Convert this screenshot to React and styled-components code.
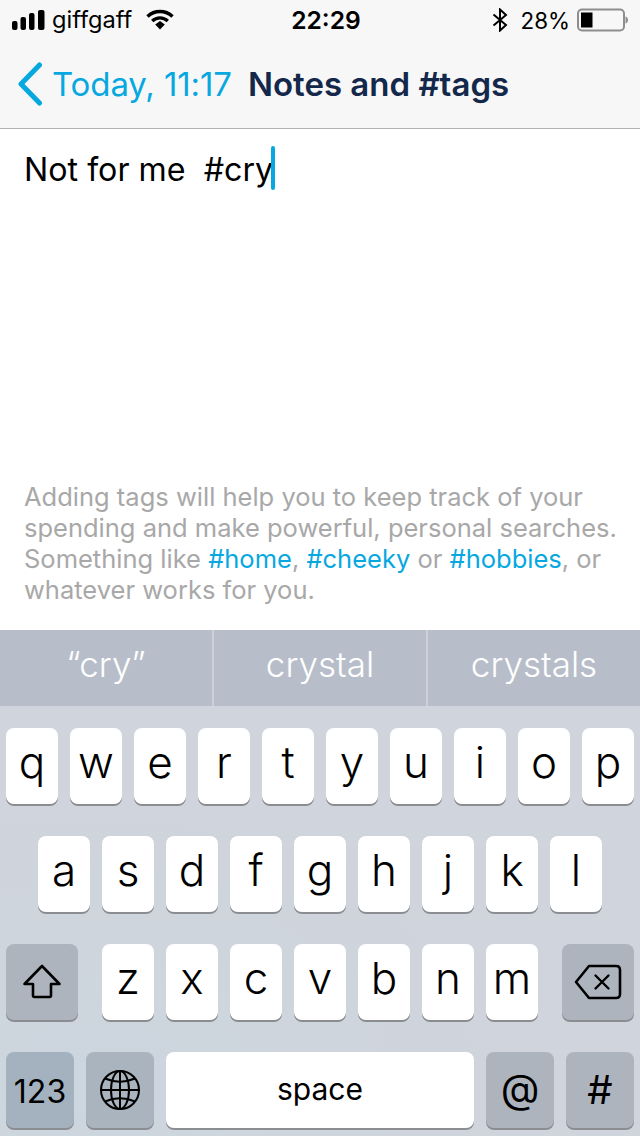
import React from "react";
import styled, { createGlobalStyle } from "styled-components";

const GlobalStyle = createGlobalStyle`
  html, body {
    margin: 0;
    padding: 0;
    background: #fff;
  }
  * {
    box-sizing: border-box;
  }
`;

const Screen = styled.div`
  width: 640px;
  height: 1136px;
  overflow: hidden;
  display: flex;
  flex-direction: column;
  font-family: Inter, "Liberation Sans", sans-serif;
  color: #000;
`;

const Header = styled.header`
  height: 129px;
  flex: none;
  background: #f7f7f7;
  border-bottom: 1px solid #b2b2b2;
`;

const StatusBar = styled.div`
  height: 40px;
  display: grid;
  grid-template-columns: 1fr auto 1fr;
  align-items: center;
  padding: 0 0 0 12px;
`;

const StatusLeft = styled.div`
  display: flex;
  align-items: center;
`;

const Carrier = styled.span`
  margin-left: 7px;
  margin-right: 14px;
  font-size: 23.6px;
  line-height: 1;
`;

const Clock = styled.span`
  font-weight: 600;
  font-size: 24.6px;
`;

const StatusRight = styled.div`
  display: flex;
  align-items: center;
  justify-content: flex-end;
  padding-right: 12px;
`;

const Percent = styled.span`
  margin: 0 7px 0 13px;
  font-size: 22.4px;
`;

const Nav = styled.nav`
  height: 88px;
  display: flex;
  align-items: center;
  padding: 0 0 0 17px;
`;

const BackLabel = styled.span`
  margin-left: 9px;
  color: #07a8e0;
  font-size: 33px;
  letter-spacing: -0.1px;
`;

const Title = styled.span`
  margin-left: 16px;
  color: #14284b;
  font-size: 33px;
  font-weight: 600;
`;

const Editor = styled.main`
  flex: 1;
  display: flex;
  flex-direction: column;
  justify-content: space-between;
  padding: 17px 20px 25px 24px;
  background: #fff;
`;

const NoteLine = styled.div`
  display: flex;
  align-items: center;
  height: 44px;
  font-size: 32.2px;
  white-space: pre;
`;

const NoteText = styled.span`
  padding-top: 3px;
`;

const Caret = styled.span`
  width: 4px;
  height: 44px;
  margin-left: -2px;
  border-radius: 2px;
  background: #07a8e0;
`;

const Hint = styled.p`
  margin: 0;
  color: #a8a8a8;
  font-size: 25.5px;
  line-height: 31px;
  white-space: nowrap;
`;

const Tag = styled.span`
  color: #07a8e0;
`;

const Suggestions = styled.div`
  height: 76px;
  flex: none;
  display: grid;
  grid-template-columns: 214px 214px 1fr;
  background: #b8bec9;
`;

const Suggestion = styled.div`
  display: flex;
  align-items: center;
  justify-content: center;
  padding-bottom: 9px;
  color: #fff;
  font-size: 35px;
  font-weight: 300;
  border-right: ${(p) => (p.$last ? "none" : "2px solid #cdd2da")};
`;

const Keyboard = styled.div`
  height: 430px;
  flex: none;
  display: flex;
  flex-direction: column;
  gap: 32px;
  padding: 22px 6px 0;
  background: radial-gradient(ellipse at 15% 88%, #ccd6de 0%, #d0d4dc 55%);
`;

const KeyRow = styled.div`
  display: flex;
  justify-content: ${(p) => p.$justify || "center"};
  gap: 12px;
`;

const Group = styled.div`
  display: flex;
  gap: 12px;
`;

const Key = styled.div`
  width: ${(p) => p.$width || 52}px;
  height: 76px;
  flex: none;
  display: flex;
  align-items: center;
  justify-content: center;
  padding-bottom: ${(p) => p.$lift ?? 8}px;
  padding-top: ${(p) => p.$drop ?? 0}px;
  border-radius: 8px;
  background: ${(p) => p.$bg || "#fff"};
  box-shadow: 0 2px 0 #8b8d91;
  font-size: 44px;
  font-weight: 300;
  color: #000;
`;

const SmallLabel = styled.span`
  font-size: ${(p) => p.$size || 30}px;
  font-weight: 400;
`;

function SignalIcon() {
  return (
    <svg width="33" height="22" viewBox="0 0 33 22">
      <rect x="0" y="12" width="5.5" height="9" rx="2" fill="#000" />
      <rect x="8.5" y="8" width="5.5" height="13" rx="2" fill="#000" />
      <rect x="17" y="4" width="5.5" height="17" rx="2" fill="#000" />
      <rect x="26" y="1" width="6.5" height="20" rx="2" fill="#000" />
    </svg>
  );
}

function WifiIcon() {
  return (
    <svg width="28" height="22" viewBox="0 0 28 22">
      <path d="M1.5 7.5 C8.5 0.8 19.5 0.8 26.5 7.5" fill="none" stroke="#000" strokeWidth="3.4" />
      <path d="M6.2 12 C10.8 7.8 17.2 7.8 21.8 12" fill="none" stroke="#000" strokeWidth="3.4" />
      <path d="M9.2 15.6 L14 12 L18.8 15.6 L14 20.5 Z" fill="#000" />
    </svg>
  );
}

function BluetoothIcon() {
  return (
    <svg width="16" height="24" viewBox="0 0 16 24">
      <path d="M1.5 6.5 L14 17 L8 22.5 V1.5 L14 7 L1.5 17.5" fill="none" stroke="#000" strokeWidth="2" />
    </svg>
  );
}

function BatteryIcon() {
  return (
    <svg width="51" height="24" viewBox="0 0 51 24">
      <rect x="1" y="1.5" width="46" height="21" rx="4" fill="none" stroke="#8e8e8e" strokeWidth="2" />
      <rect x="4" y="4.5" width="11.5" height="15" fill="#000" />
      <path d="M48.5 8.5 C50.5 9 51 11 51 12 C51 13 50.5 15 48.5 15.5 Z" fill="#8e8e8e" />
    </svg>
  );
}

function BackIcon() {
  return (
    <svg width="26" height="44" viewBox="0 0 26 44">
      <path d="M22.5 3 L4 22 L22.5 41" fill="none" stroke="#07a8e0" strokeWidth="5" strokeLinecap="round" strokeLinejoin="round" />
    </svg>
  );
}

function ShiftIcon() {
  return (
    <svg width="40" height="36" viewBox="0 0 40 36">
      <path
        d="M20 2 L37.5 20 H29 V31.5 Q29 33 27.5 33 H12.5 Q11 33 11 31.5 V20 H2.5 Z"
        fill="none"
        stroke="#000"
        strokeWidth="2.6"
        strokeLinejoin="round"
      />
    </svg>
  );
}

function DeleteIcon() {
  return (
    <svg width="48" height="36" viewBox="0 0 48 36">
      <path
        d="M15 2 H42 Q46 2 46 6 V30 Q46 34 42 34 H15 L2 18 Z"
        fill="none"
        stroke="#000"
        strokeWidth="2.6"
        strokeLinejoin="round"
      />
      <path d="M21.5 11.5 L34.5 24.5 M34.5 11.5 L21.5 24.5" stroke="#000" strokeWidth="2.4" strokeLinecap="round" />
    </svg>
  );
}

function GlobeIcon() {
  return (
    <svg width="42" height="42" viewBox="0 0 42 42" fill="none" stroke="#000" strokeWidth="2">
      <circle cx="21" cy="21" r="19" />
      <ellipse cx="21" cy="21" rx="9" ry="19" />
      <path d="M21 2 V40 M2 21 H40" />
      <path d="M6 9.5 Q21 16 36 9.5 M6 32.5 Q21 26 36 32.5" />
    </svg>
  );
}

const rowOne = ["q", "w", "e", "r", "t", "y", "u", "i", "o", "p"];
const rowTwo = ["a", "s", "d", "f", "g", "h", "j", "k", "l"];
const rowThree = ["z", "x", "c", "v", "b", "n", "m"];

export default function App() {
  return (
    <Screen>
      <GlobalStyle />
      <Header>
        <StatusBar>
          <StatusLeft>
            <SignalIcon />
            <Carrier>giffgaff</Carrier>
            <WifiIcon />
          </StatusLeft>
          <Clock>22:29</Clock>
          <StatusRight>
            <BluetoothIcon />
            <Percent>28%</Percent>
            <BatteryIcon />
          </StatusRight>
        </StatusBar>
        <Nav>
          <BackIcon />
          <BackLabel>Today, 11:17</BackLabel>
          <Title>Notes and #tags</Title>
        </Nav>
      </Header>

      <Editor>
        <NoteLine>
          <NoteText>Not for me  #cry</NoteText>
          <Caret />
        </NoteLine>
        <Hint>
          Adding tags will help you to keep track of your
          <br />
          spending and make powerful, personal searches.
          <br />
          Something like <Tag>#home</Tag>, <Tag>#cheeky</Tag> or <Tag>#hobbies</Tag>, or
          <br />
          whatever works for you.
        </Hint>
      </Editor>

      <Suggestions>
        <Suggestion>“cry”</Suggestion>
        <Suggestion>crystal</Suggestion>
        <Suggestion $last>crystals</Suggestion>
      </Suggestions>

      <Keyboard>
        <KeyRow>
          {rowOne.map((k) => (
            <Key key={k}>{k}</Key>
          ))}
        </KeyRow>
        <KeyRow>
          {rowTwo.map((k) => (
            <Key key={k}>{k}</Key>
          ))}
        </KeyRow>
        <KeyRow $justify="space-between">
          <Key $width={72} $bg="#aeb4be" $lift={0}>
            <ShiftIcon />
          </Key>
          <Group>
            {rowThree.map((k) => (
              <Key key={k}>{k}</Key>
            ))}
          </Group>
          <Key $width={72} $bg="#aeb4be" $lift={1}>
            <DeleteIcon />
          </Key>
        </KeyRow>
        <KeyRow $justify="space-between">
          <Group>
            <Key $width={68} $bg="#a3b2be" $lift={0} $drop={3}>
              <SmallLabel $size={32}>123</SmallLabel>
            </Key>
            <Key $width={68} $bg="#a9b4bf" $lift={0}>
              <GlobeIcon />
            </Key>
          </Group>
          <Key $width={308} $lift={2}>
            <SmallLabel $size={30}>space</SmallLabel>
          </Key>
          <Group>
            <Key $width={68} $bg="#aeb4be" $lift={4}>
              <SmallLabel $size={40}>@</SmallLabel>
            </Key>
            <Key $width={68} $bg="#aeb4be" $lift={2}>
              <SmallLabel $size={40}>#</SmallLabel>
            </Key>
          </Group>
        </KeyRow>
      </Keyboard>
    </Screen>
  );
}
